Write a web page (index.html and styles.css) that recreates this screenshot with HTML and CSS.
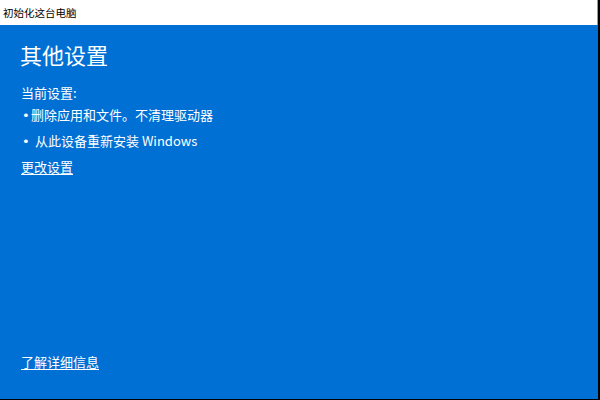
FILE: index.html
```html
<!DOCTYPE html>
<html lang="zh-CN">
<head>
<meta charset="utf-8">
<link rel="stylesheet" href="styles.css">
</head>
<body>
<div class="window">
  <div class="titlebar">初始化这台电脑</div>
  <div class="content">
    <div class="main">
      <h1 class="title">其他设置</h1>
      <p class="label">当前设置:</p>
      <ul class="list">
        <li class="item item-first">删除应用和文件。不清理驱动器</li>
        <li class="item item-second">从此设备重新安装 Windows</li>
      </ul>
      <a class="link" href="#">更改设置</a>
    </div>
    <a class="link footer-link" href="#">了解详细信息</a>
  </div>
</div>
</body>
</html>
```
FILE: styles.css
```css
html, body {
  margin: 0;
  padding: 0;
  width: 600px;
  height: 400px;
  overflow: hidden;
  background: #000;
}
.window {
  box-sizing: border-box;
  width: 600px;
  height: 400px;
  border-right: 2px solid #000;
  border-bottom: 1px solid #000;
  display: flex;
  flex-direction: column;
  font-family: "Noto Sans CJK SC", "Noto Sans", sans-serif;
}
.titlebar {
  height: 25px;
  background: #fff;
  border-right: 1px solid #9a9a9a;
  color: #000;
  font-size: 10.5px;
  line-height: 25px;
  padding-left: 3px;
  flex: none;
}
.content {
  flex: 1;
  background: #0070d4;
  color: #fff;
  display: flex;
  flex-direction: column;
  justify-content: space-between;
  padding: 0 0 28px 21px;
}
.main {
  display: flex;
  flex-direction: column;
  align-items: flex-start;
}
.title {
  margin: 14px 0 0 -1px;
  font-size: 22px;
  font-weight: normal;
  line-height: 30px;
}
.label {
  margin: 15px 0 0 0;
  font-size: 13px;
  line-height: 18px;
}
.list {
  list-style: none;
  margin: 4px 0 0 0;
  padding: 0;
}
.item {
  font-size: 13px;
  line-height: 18px;
  position: relative;
  padding-left: 10px;
}
.item::before {
  content: "•";
  font-family: "DejaVu Sans", sans-serif;
  font-size: 13px;
  position: absolute;
  left: 1px;
  top: 1px;
}
.item-second {
  margin-top: 8px;
  padding-left: 14px;
}
.link {
  color: #fff;
  font-size: 13px;
  line-height: 18px;
  text-decoration: underline;
  text-underline-offset: 2px;
}
.main .link {
  margin-top: 8px;
}
.footer-link {
  align-self: flex-start;
}
```
